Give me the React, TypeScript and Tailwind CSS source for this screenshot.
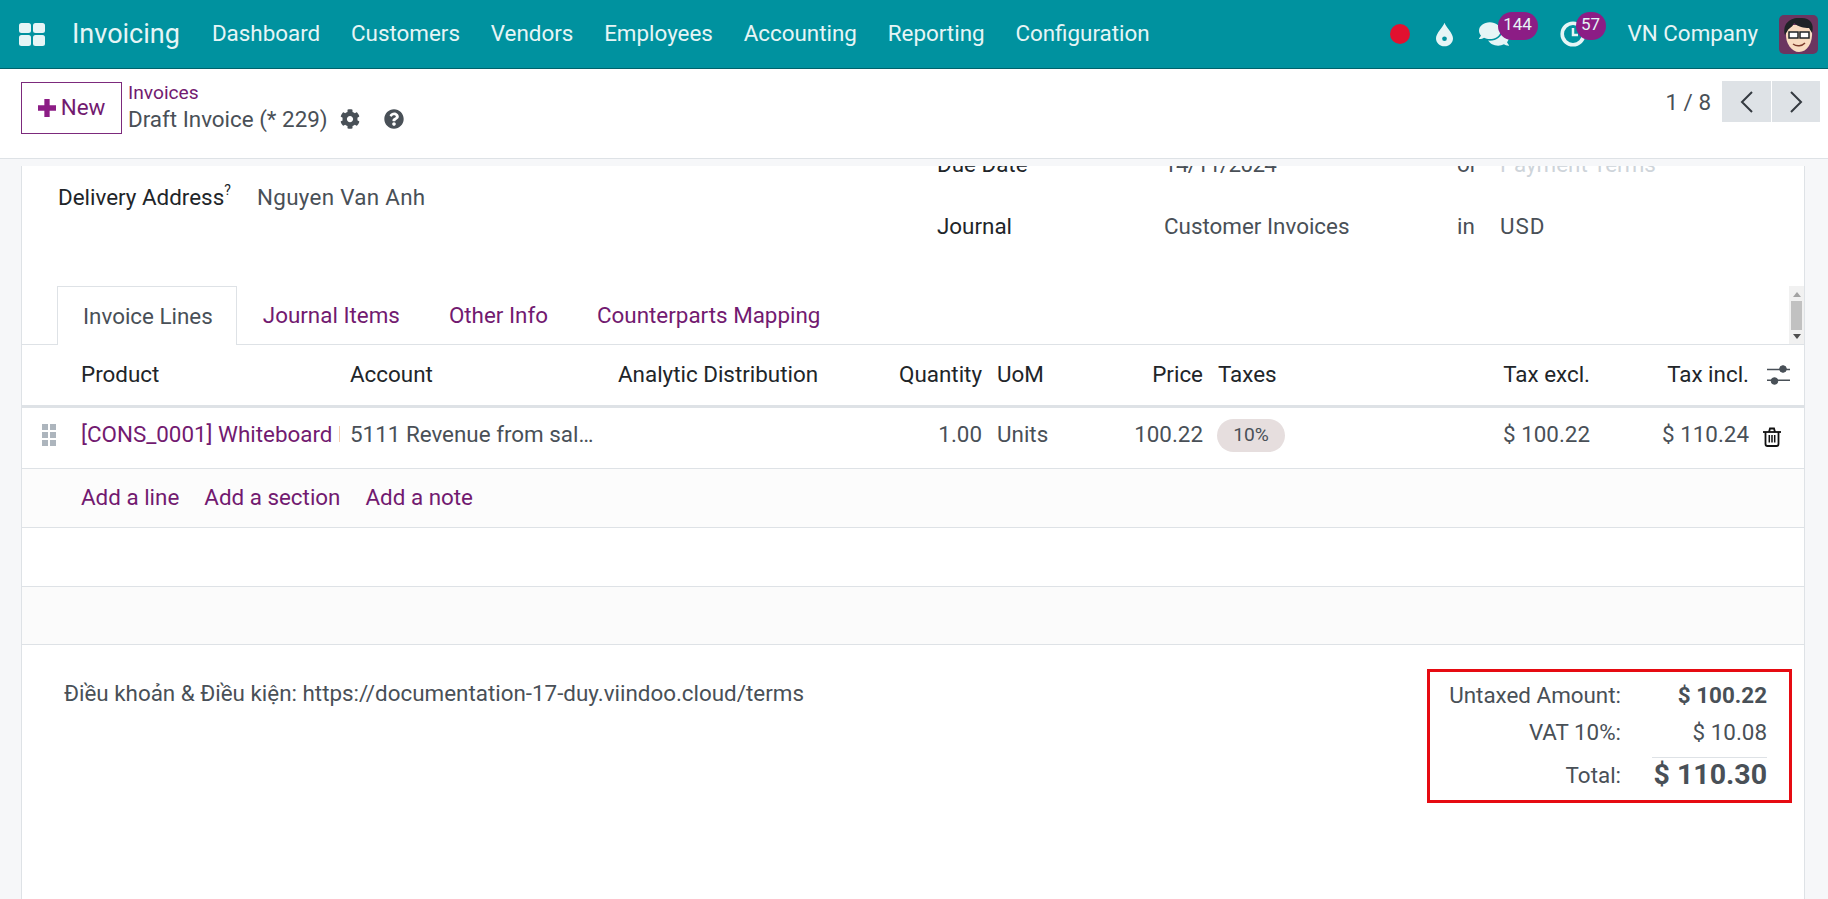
import { FaCog, FaComments, FaQuestionCircle } from 'react-icons/fa';

const rowGrid = 'grid grid-cols-[59px_269px_268px_200px_164px_95px_126px_215px_172px_159px_1fr] items-center whitespace-nowrap';

function AppsIcon() {
  return (
    <svg width="26" height="23" viewBox="0 0 26 23" fill="#e6f5f6">
      <rect x="0" y="0" width="12" height="10" rx="2.500" />
      <rect x="14" y="0" width="12" height="10" rx="2.500" />
      <rect x="0" y="12" width="12" height="11" rx="2.500" />
      <rect x="14" y="12" width="12" height="11" rx="2.500" />
    </svg>
  );
}

function Drop() {
  return (
    <svg width="17" height="25" viewBox="0 0 18 25">
      <path d="M9 0C10 4 18 11 18 16.500C18 21.500 14 25 9 25C4 25 0 21.500 0 16.500C0 11 8 4 9 0Z" fill="#e6f5f6" />
      <circle cx="9" cy="17" r="2.500" fill="#00929f" />
    </svg>
  );
}

function Clock() {
  return (
    <svg width="26" height="26" viewBox="0 0 26 26" fill="none" stroke="#e6f5f6">
      <circle cx="13" cy="13" r="10.800" strokeWidth="3.600" />
      <path d="M13 7V14H18" strokeWidth="2.500" />
    </svg>
  );
}

function Sliders() {
  return (
    <svg width="23" height="20" viewBox="0 0 23 20" fill="#495057" stroke="#495057">
      <path d="M0 4.500H23M0 15.200H23" strokeWidth="1.400" />
      <circle cx="16" cy="4" r="3.300" />
      <circle cx="7.500" cy="16" r="3.300" />
    </svg>
  );
}

function Trash() {
  return (
    <svg width="18" height="20" viewBox="0 0 18 20" fill="none" stroke="#111" strokeWidth="1.800">
      <path d="M0 5H18" />
      <path d="M6 5L7 1.500H11L12 5" />
      <path d="M2.500 5V17C2.500 18.200 3.200 19 4.500 19H13.500C14.800 19 15.500 18.200 15.500 17V5" />
      <path d="M6.300 8V15.500M9 8V15.500M11.700 8V15.500" strokeWidth="1.500" />
    </svg>
  );
}

function Avatar() {
  return (
    <svg width="39" height="39" viewBox="0 0 39 39">
      <rect width="39" height="39" rx="5" fill="#6b3560" />
      <path d="M7 17C6 29 13 37 20 37C28 37 34 28 33 16L29 10H11Z" fill="#f8dcc0" />
      <path d="M6 20C3 9 11 2 21 3C30 2 36 8 33 18L30 13C25 13 19 12 15 8C14 12 10 13 9 15Z" fill="#1f2326" />
      <rect x="10" y="17" width="9" height="6" fill="#fff" stroke="#1f2326" strokeWidth="1.500" />
      <rect x="21" y="17" width="9" height="6" fill="#fff" stroke="#1f2326" strokeWidth="1.500" />
      <path d="M14 29C18 32 23 31 26 28" fill="none" stroke="#7a3a2a" strokeWidth="1.500" />
    </svg>
  );
}

function Grip() {
  return (
    <div className="ml-[20px] grid grid-cols-2 gap-x-[2px] gap-y-[2px] w-[14px]">
      {[0, 1, 2, 3, 4, 5].map((i) => (
        <span key={i} className="w-[6px] h-[6px] bg-[#adb5bd]" />
      ))}
    </div>
  );
}

export default function App() {
  const nav = ['Dashboard', 'Customers', 'Vendors', 'Employees', 'Accounting', 'Reporting', 'Configuration'];
  const link = 'text-[#721a70]';
  return (
    <div className="h-[899px] overflow-hidden bg-[#f6f7f9] text-[22.4px] text-[#495057] font-['Roboto',sans-serif] flex flex-col">
      <header className="h-[69px] shrink-0 bg-[#00929f] border-b border-[#00626b] flex items-center text-[#e6f5f6]">
        <div className="ml-[19px] w-[53px] flex"><AppsIcon /></div>
        <span className="text-[27px] mr-[32px]">Invoicing</span>
        <nav className="flex gap-[30.800px]">
          {nav.map((n) => (
            <span key={n}>{n}</span>
          ))}
        </nav>
        <div className="ml-auto flex items-center pr-[10px]">
          <span className="w-[20px] h-[20px] rounded-full bg-[#e2112f]" />
          <span className="ml-[26px] flex"><Drop /></span>
          <span className="ml-[26px] relative flex">
            <FaComments size={30} color="#e6f5f6" />
            <span className="absolute left-[19px] -top-[7px] h-[28px] w-[40px] rounded-full bg-[#8c1d85] text-[17px] text-center leading-[24px]">144</span>
          </span>
          <span className="ml-[51px] relative flex">
            <Clock />
            <span className="absolute left-[16px] -top-[9px] h-[28px] w-[30px] rounded-full bg-[#8c1d85] text-[17px] text-center leading-[24px]">57</span>
          </span>
          <span className="ml-[42px] mr-[21px]">VN Company</span>
          <Avatar />
        </div>
      </header>

      <div className="h-[90px] shrink-0 bg-white border-b border-[#dee2e6] flex pl-[21px] pr-[8px]">
        <button className={`mt-[13px] h-[52px] w-[101px] border border-[#7c2a7c] ${link} flex items-center justify-center gap-[5px]`}>
          <svg width="18" height="18" viewBox="0 0 17 17" fill="#8c1d85"><path d="M6 0H11V6H17V11H11V17H6V11H0V6H6Z" /></svg>
          New
        </button>
        <div className="ml-[6px] mt-[12px]">
          <div className={`text-[19.200px] leading-[23px] ${link}`}>Invoices</div>
          <div className="flex items-center leading-[30px]">
            Draft Invoice (* 229)
            <span className="ml-[12px] flex"><FaCog size={20} /></span>
            <span className="ml-[24px] flex"><FaQuestionCircle size={20} /></span>
          </div>
        </div>
        <div className="ml-auto flex items-start mt-[12px]">
          <span className="mt-[5px] mr-[11px]">1 / 8</span>
          <button className="w-[49px] h-[41px] bg-[#dee2e6] flex items-center justify-center mr-[1px]">
            <svg width="14" height="22" viewBox="0 0 14 22" fill="none" stroke="#343a40" strokeWidth="2"><path d="M12 1L2 11L12 21" /></svg>
          </button>
          <button className="w-[48px] h-[41px] bg-[#dee2e6] flex items-center justify-center">
            <svg width="14" height="22" viewBox="0 0 14 22" fill="none" stroke="#343a40" strokeWidth="2"><path d="M2 1L12 11L2 21" /></svg>
          </button>
        </div>
      </div>

      <main className="flex-1 ml-[21px] mr-[23px] mt-[7px] bg-white border-x border-[#dee2e6]">
        <div className="h-[120px] overflow-hidden flex">
          <div className="flex-1 pl-[36px] pt-[14px] flex leading-[34px]">
            <span className="w-[199px] text-[#212529]">Delivery Address<sup className="text-[14px] top-[-10px]">?</sup></span>
            <span className="tracking-[0.3px]">Nguyen Van Anh</span>
          </div>
          <div className="w-[867px] -mt-[19px] flex flex-col gap-[28px] leading-[34px]">
            <div className="grid grid-cols-[227px_293px_43px_1fr]">
              <span className="text-[#212529]">Due Date</span>
              <span className="tracking-[-0.7px]">14/11/2024</span>
              <span>or</span>
              <span className="text-[#ced4da]">Payment Terms</span>
            </div>
            <div className="grid grid-cols-[227px_293px_43px_1fr]">
              <span className="text-[#212529]">Journal</span>
              <span>Customer Invoices</span>
              <span>in</span>
              <span className="tracking-[1px]">USD</span>
            </div>
          </div>
        </div>

        <div className="h-[59px] relative flex pl-[35px] border-b border-[#dee2e6]">
          <div className="h-[59px] pt-[2px] pl-[25px] pr-[23px] bg-white border border-b-0 border-[#dee2e6] flex items-center">Invoice Lines</div>
          <div className={`flex gap-[49px] pl-[26px] pt-[2px] items-center ${link}`}>
            <span>Journal Items</span>
            <span>Other Info</span>
            <span>Counterparts Mapping</span>
          </div>
          <div className="absolute right-0 top-0 w-[15px] h-[58px] bg-[#f1f1f1] flex flex-col items-center">
            <span className="mt-[6px] w-0 h-0 border-x-[4px] border-x-transparent border-b-[5px] border-b-[#a3a3a3]" />
            <span className="mt-[4px] w-[11px] h-[29px] bg-[#c1c1c1]" />
            <span className="mt-[4px] w-0 h-0 border-x-[4px] border-x-transparent border-t-[5px] border-t-[#505050]" />
          </div>
        </div>

        <div className={`${rowGrid} h-[63px] border-b-[3px] border-[#dee2e6] text-[#212529]`}>
          <span />
          <span>Product</span>
          <span>Account</span>
          <span>Analytic Distribution</span>
          <span className="text-right">Quantity</span>
          <span className="pl-[15px]">UoM</span>
          <span className="text-right">Price</span>
          <span className="pl-[15px]">Taxes</span>
          <span className="text-right">Tax excl.</span>
          <span className="text-right">Tax incl.</span>
          <span className="ml-[18px] flex"><Sliders /></span>
        </div>

        <div className={`${rowGrid} h-[61px] pb-[6px] border-b border-[#dee2e6]`}>
          <Grip />
          <div className={`w-[259px] overflow-hidden ${link}`}>[CONS_0001] Whiteboard Pen</div>
          <div className="w-[245px] truncate">5111 Revenue from sale of goods</div>
          <span />
          <span className="text-right">1.00</span>
          <span className="pl-[15px]">Units</span>
          <span className="text-right">100.22</span>
          <div className="pl-[14px]">
            <span className="w-[68px] h-[33px] rounded-full bg-[#e6dede] text-[19.200px] flex items-center justify-center">10%</span>
          </div>
          <span className="text-right">$ 100.22</span>
          <span className="text-right">$ 110.24</span>
          <span className="ml-[14px] mt-[4px] flex"><Trash /></span>
        </div>

        <div className={`h-[59px] pl-[59px] flex items-center gap-[25px] bg-[#fcfcfc] border-b border-[#dee2e6] ${link}`}>
          <span>Add a line</span>
          <span>Add a section</span>
          <span>Add a note</span>
        </div>
        <div className="h-[59px] border-b border-[#dee2e6]" />
        <div className="h-[58px] bg-[#fbfbfb] border-b border-[#dee2e6]" />

        <div className="flex justify-between pl-[42px] pr-[12px]">
          <div className="pt-[34px] leading-[28px]">Điều khoản &amp; Điều kiện: https://documentation-17-duy.viindoo.cloud/terms</div>
          <div className="mt-[24px] w-[365px] h-[134px] border-[3px] border-[#e60b12] pt-[5px] pr-[22px]">
            <div className="grid grid-cols-[1fr_146px] text-right items-center whitespace-nowrap">
              <span className="leading-[37px]">Untaxed Amount:</span>
              <span className="font-bold leading-[37px]">$ 100.22</span>
              <span className="leading-[36px]">VAT 10%:</span>
              <span className="leading-[36px]">$ 10.08</span>
              <span className="mt-[7px] leading-[34px]">Total:</span>
              <span className="mt-[7px] ml-[31px] border-t border-[#dee2e6] font-bold text-[28.500px] leading-[34px]">$ 110.30</span>
            </div>
          </div>
        </div>
      </main>
    </div>
  );
}
